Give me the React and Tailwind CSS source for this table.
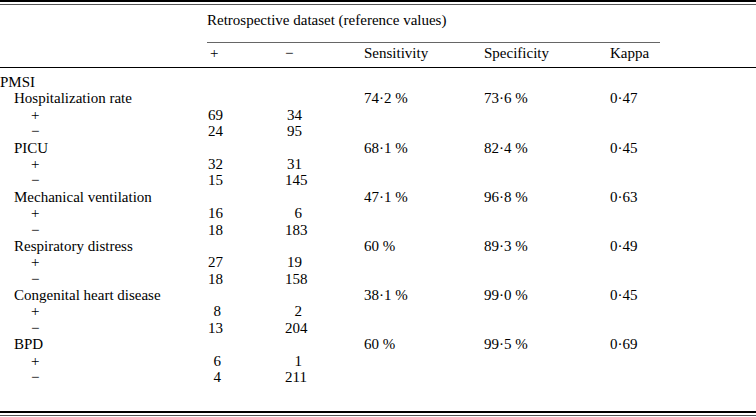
const groups = [
  { label: 'Hospitalization rate', sens: '74·2 %', spec: '73·6 %', kappa: '0·47', pos: [69, 34], neg: [24, 95] },
  { label: 'PICU', sens: '68·1 %', spec: '82·4 %', kappa: '0·45', pos: [32, 31], neg: [15, 145] },
  { label: 'Mechanical ventilation', sens: '47·1 %', spec: '96·8 %', kappa: '0·63', pos: [16, 6], neg: [18, 183] },
  { label: 'Respiratory distress', sens: '60 %', spec: '89·3 %', kappa: '0·49', pos: [27, 19], neg: [18, 158] },
  { label: 'Congenital heart disease', sens: '38·1 %', spec: '99·0 %', kappa: '0·45', pos: [8, 2], neg: [13, 204] },
  { label: 'BPD', sens: '60 %', spec: '99·5 %', kappa: '0·69', pos: [6, 1], neg: [4, 211] },
];

const cols = 'grid grid-cols-[208px_77px_79px_120px_126px_1fr]';

const Row = ({ label, indent = '', a, b, sens, spec, kappa }) => (
  <div className={`${cols} h-[16.4px] leading-[16.4px]`}>
    <div className={`${indent} whitespace-nowrap`}>{label}</div>
    <div className="pr-[64px] text-right">{a}</div>
    <div className="pr-[62px] text-right">{b}</div>
    <div>{sens}</div>
    <div>{spec}</div>
    <div>{kappa}</div>
  </div>
);

export default function App() {
  return (
    <div
      className="w-[756px] h-[417px] bg-white text-[15px] text-black"
      style={{ fontFamily: '"Liberation Serif", "Times New Roman", serif' }}
    >
      <div className="h-[2px] bg-black" />
      <div className="mt-[2px] h-px bg-[#555]" />

      {/* Header */}
      <div className="h-[32px] pl-[207px] pt-[6px] leading-[18px]">
        <div className="w-[453px] h-[32px] border-b border-[#666]">
          Retrospective dataset (reference values)
        </div>
      </div>
      <div className={`${cols} h-[31px] pt-[7px] leading-[18px] border-b border-black`}>
        <div />
        <div className="pl-[2px]">+</div>
        <div>−</div>
        <div>Sensitivity</div>
        <div>Specificity</div>
        <div>Kappa</div>
      </div>

      {/* Body */}
      <div className="pt-[6px] pb-[26px]">
        <Row label="PMSI" />
        {groups.map((g) => (
          <div key={g.label}>
            <Row label={g.label} indent="pl-[14px]" sens={g.sens} spec={g.spec} kappa={g.kappa} />
            <Row label="+" indent="pl-[31px]" a={g.pos[0]} b={g.pos[1]} />
            <Row label="−" indent="pl-[31px]" a={g.neg[0]} b={g.neg[1]} />
          </div>
        ))}
      </div>

      <div className="h-[2px] bg-black" />
      <div className="mt-[2px] h-px bg-[#555]" />
    </div>
  );
}
